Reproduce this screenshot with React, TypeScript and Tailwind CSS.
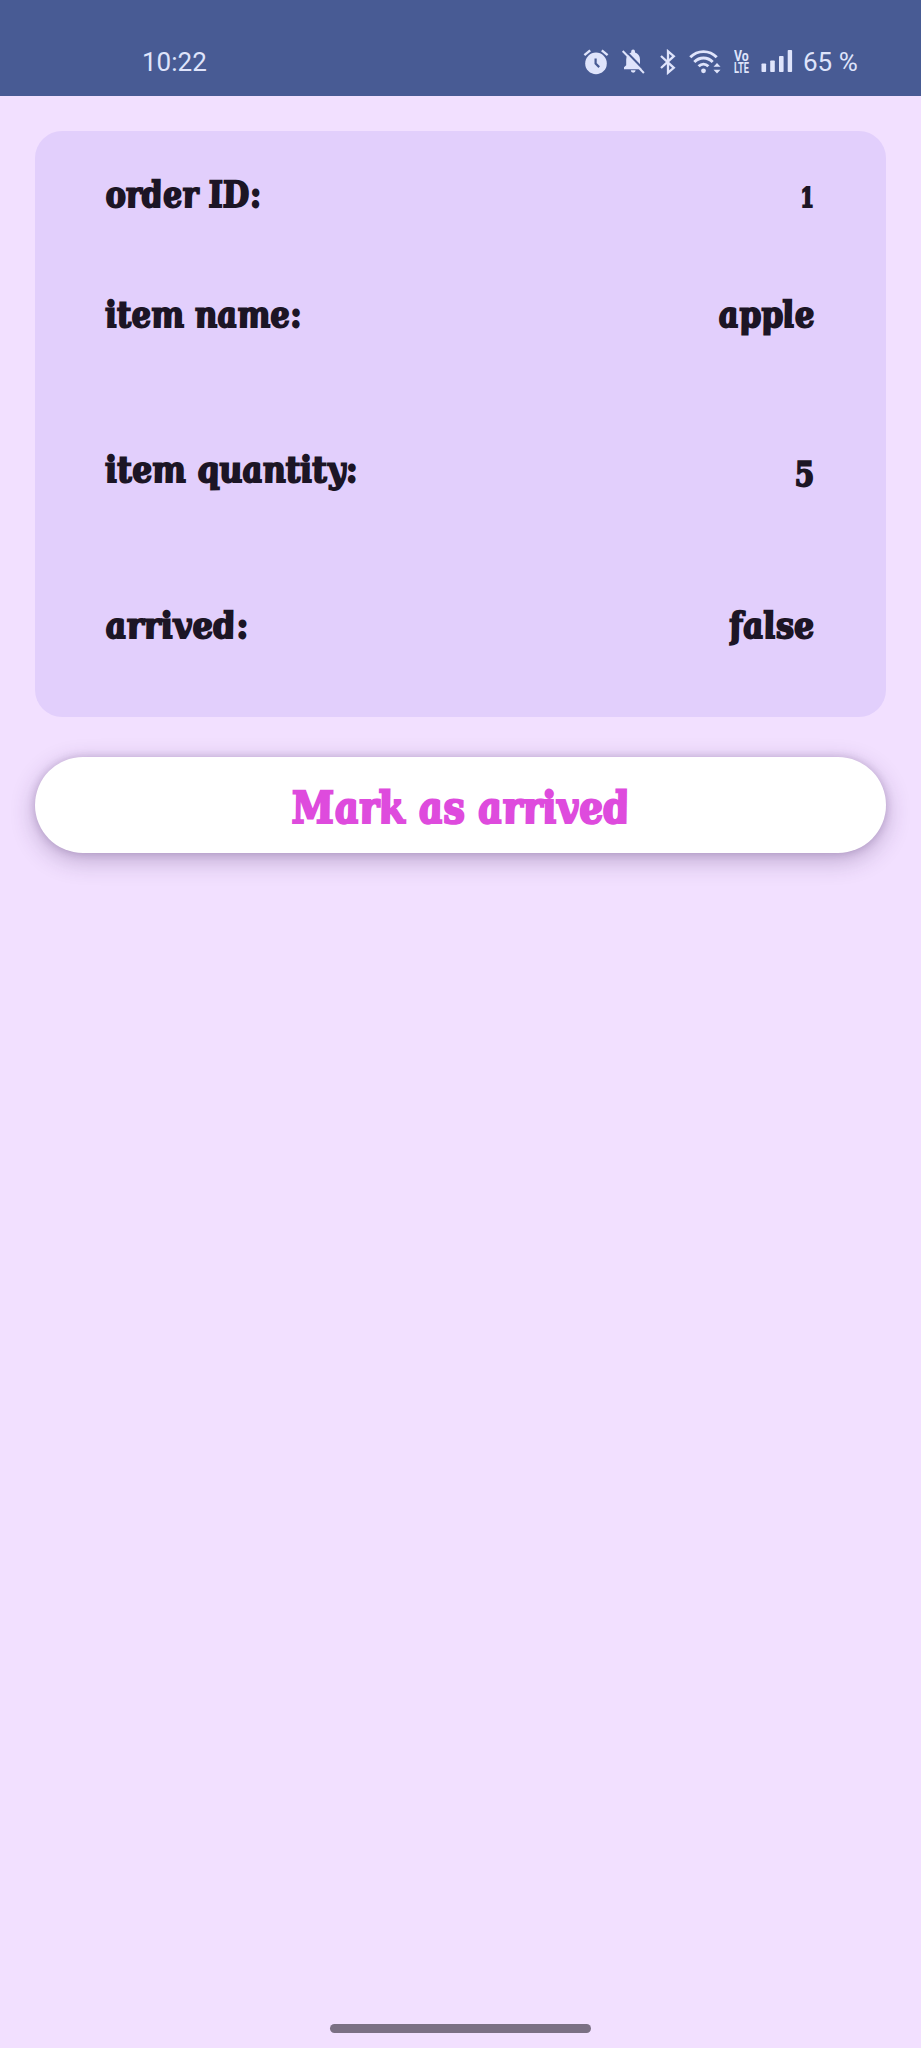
const display =
  "inline-block whitespace-nowrap font-['DejaVu_Serif_Condensed','DejaVu_Serif',serif] font-bold italic [font-stretch:condensed]";

const rows = [
  {
    label: "order ID:",
    value: "1",
    row: "",
    labelFit: "[transform:scaleX(0.94)_skewX(9deg)]",
    valueFit: "text-[27px] [transform:scaleX(0.8)_skewX(9deg)]",
  },
  {
    label: "item name:",
    value: "apple",
    row: "mt-[72px]",
    labelFit: "[transform:scaleX(0.957)_skewX(9deg)]",
    valueFit: "[transform:scaleX(0.97)_skewX(9deg)]",
  },
  {
    label: "item quantity:",
    value: "5",
    row: "mt-[107px]",
    labelFit: "[transform:scaleX(0.98)_skewX(9deg)]",
    valueFit: "text-[34px] [transform:translateY(4px)_scaleX(0.92)_skewX(9deg)]",
  },
  {
    label: "arrived:",
    value: "false",
    row: "mt-[108px]",
    labelFit: "[transform:scaleX(1.01)_skewX(9deg)]",
    valueFit: "[transform:scaleX(0.99)_skewX(9deg)]",
  },
];

function AlarmIcon() {
  return (
    <svg className="h-[26px] w-[26px]" viewBox="0 0 26 26" fill="none">
      <path d="M1.400 6.200 7.200 1.300M24.600 6.200 18.800 1.300" stroke="#dfe4fb" strokeWidth="2.4" />
      <circle cx="13" cy="14.4" r="10.800" fill="#dfe4fb" />
      <path d="M12.6 9.500v5l3.600 3.600" stroke="#485b94" strokeWidth="2.2" />
    </svg>
  );
}

function BellOffIcon() {
  return (
    <svg className="h-[26px] w-[26px]" viewBox="0 0 26 26" fill="none">
      <path
        d="M3 20.2v-2l2.2-2V10.500c0-3.500 2-6 5-6.900V2.500a1.900 1.900 0 0 1 3.800 0v1.100c3 .9 5 3.400 5 6.900v5.700l2.400 2v2z"
        fill="#dfe4fb"
      />
      <path d="M9.800 21.300h4.800a2.400 2.400 0 0 1-4.800 0z" fill="#dfe4fb" />
      <path d="M3.400.8 24.900 22.800" stroke="#485b94" strokeWidth="2.200" />
      <path d="M1.700 2 22.900 24" stroke="#dfe4fb" strokeWidth="2" />
    </svg>
  );
}

function BluetoothIcon() {
  return (
    <svg className="h-[26px] w-[18px]" viewBox="0 0 18 26" fill="none">
      <path d="M2 7 14.800 18.800 9 23.700V2.300l5.800 4.900L2 19" stroke="#dfe4fb" strokeWidth="2.300" />
    </svg>
  );
}

function WifiIcon() {
  return (
    <svg className="h-[26px] w-[32px]" viewBox="0 0 32 26" fill="none">
      <path
        d="M1.300 8.200C8.600.7 20.400.7 27.700 8.200M5.300 12.900c5.200-5.300 13.200-5.300 18.400 0M9.600 17.300c3-2.900 6.800-2.900 9.800 0"
        stroke="#dfe4fb"
        strokeWidth="2.900"
      />
      <circle cx="14.500" cy="21.800" r="2.400" fill="#dfe4fb" />
      <path d="M24.500 17.800 28 14.100l3.500 3.700zM24.500 20.800 28 24.500l3.500-3.700z" fill="#dfe4fb" />
    </svg>
  );
}

function SignalIcon() {
  return (
    <svg className="h-[24px] w-[32px]" viewBox="0 0 32 24" fill="#dfe4fb">
      <rect x="0.500" y="14.500" width="4.600" height="8.500" rx="0.800" />
      <rect x="9.200" y="11.500" width="4.600" height="11.500" rx="0.800" />
      <rect x="18" y="7" width="4.600" height="16" rx="0.800" />
      <rect x="26.700" y="1" width="4.400" height="22" rx="0.800" />
    </svg>
  );
}

export default function App() {
  return (
    <div className="flex h-[2048px] w-[921px] flex-col overflow-hidden bg-[#f2e0ff]">
      <header className="flex h-24 shrink-0 items-start justify-between bg-[#485b94] pr-[63px] pl-[142px] pt-[47px] font-[Roboto,sans-serif] text-[26px] leading-[30px] text-[#dfe4fb]">
        <span>10:22</span>
        <div className="flex items-start">
          <div className="mt-[2px] flex">
            <AlarmIcon />
            <div className="ml-[12px]">
              <BellOffIcon />
            </div>
            <div className="ml-[12px]">
              <BluetoothIcon />
            </div>
            <div className="ml-[12px]">
              <WifiIcon />
            </div>
          </div>
          <div className="mt-[3px] ml-[13px] flex w-4 flex-col text-[14px] leading-[12px] font-bold">
            <span className="origin-left [transform:scaleX(0.88)]">Vo</span>
            <span className="w-[25px] origin-left [transform:scaleX(0.66)]">LTE</span>
          </div>
          <div className="mt-[2px] ml-[11px]">
            <SignalIcon />
          </div>
          <span className="ml-[10px] w-[55px] whitespace-nowrap">65 %</span>
        </div>
      </header>

      <main className="flex flex-col px-[35px] pt-[35px]">
        <section className="h-[586px] rounded-[27px] bg-[#e2cffc] pt-[39px] pr-[70px] pl-[72px] text-[36px] leading-[48px] text-[#1c1525] [-webkit-text-stroke:1.8px_#1c1525]">
          {rows.map((r) => (
            <div key={r.label} className={`flex h-12 items-baseline justify-between ${r.row}`}>
              <span className={`${display} origin-[0%_78%] ${r.labelFit}`}>{r.label}</span>
              <span className={`${display} origin-[100%_78%] ${r.valueFit}`}>{r.value}</span>
            </div>
          ))}
        </section>

        <button className="mt-10 flex h-24 items-center justify-center rounded-full bg-white pt-[6px] text-[44px] leading-[56px] text-[#de4bdd] shadow-[0_7px_24px_rgba(60,30,90,0.3),0_0_8px_rgba(60,30,90,0.2)] [-webkit-text-stroke:2.2px_#de4bdd]">
          <span className={`${display} [transform:scaleX(0.96)_skewX(9deg)]`}>Mark as arrived</span>
        </button>
      </main>

      <footer className="mt-auto flex justify-center pb-[15px]">
        <div className="h-[9px] w-[261px] rounded-full bg-[#7b7084]" />
      </footer>
    </div>
  );
}
